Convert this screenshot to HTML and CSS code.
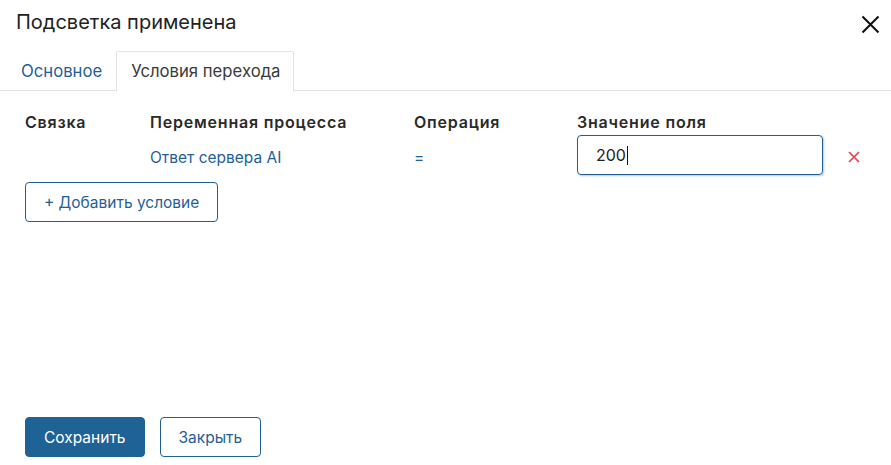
FILE: index.html
```html
<!DOCTYPE html>
<html lang="ru">
<head>
<meta charset="utf-8">
<link rel="stylesheet" href="styles.css">
</head>
<body>
<div class="dialog">
  <div class="head">
    <h1 class="title">Подсветка применена</h1>
    <button class="close" aria-label="Закрыть">
      <svg width="19" height="19" viewBox="0 0 19 19"><path d="M1.5 1.5L17.5 17.5M17.5 1.5L1.5 17.5" stroke="#111" stroke-width="2.1" fill="none"/></svg>
    </button>
  </div>
  <div class="tabs">
    <div class="tab">Основное</div>
    <div class="tab active">Условия перехода</div>
  </div>
  <div class="content">
    <div class="grid">
      <div class="th">Связка</div>
      <div class="th">Переменная процесса</div>
      <div class="th">Операция</div>
      <div class="th">Значение поля</div>
      <div></div>
      <div></div>
      <div class="link">Ответ сервера AI</div>
      <div class="link">=</div>
      <div class="field"><span class="val">200</span><span class="caret"></span></div>
      <div class="del">
        <svg width="12" height="12" viewBox="0 0 12 12"><path d="M1 1L11 11M11 1L1 11" stroke="#e8404c" stroke-width="1.7" fill="none"/></svg>
      </div>
    </div>
    <button class="btn outline add">+ Добавить условие</button>
  </div>
  <div class="footer">
    <button class="btn primary">Сохранить</button>
    <button class="btn outline">Закрыть</button>
  </div>
</div>
</body>
</html>
```
FILE: styles.css
```css
* { box-sizing: border-box; }
html, body { margin: 0; padding: 0; background: #fff; }
body {
  font-family: Inter, "Noto Sans", sans-serif;
  color: #333;
  font-size: 15.5px;
}
.dialog {
  width: 891px;
  height: 465px;
  display: flex;
  flex-direction: column;
}
.head {
  display: flex;
  justify-content: space-between;
  align-items: flex-start;
  padding: 9px 11px 0 16px;
  height: 51px;
}
.title {
  margin: 0;
  font-size: 20px;
  font-weight: 400;
  line-height: 26px;
  color: #222;
}
.close {
  border: 0;
  background: none;
  padding: 0;
  margin: 6px 0 0 0;
  width: 19px;
  height: 19px;
  cursor: pointer;
}
.close svg { display: block; }
.tabs {
  display: flex;
  padding-left: 7px;
  border-bottom: 1px solid #e3e3e3;
  height: 40px;
}
.tab {
  padding: 0 14px;
  height: 40px;
  line-height: 40px;
  color: #1f6097;
  font-size: 16.7px;
}
.tab.active {
  color: #3a3a3a;
  border: 1px solid #e3e3e3;
  border-bottom: 1px solid #fff;
  border-radius: 3px 3px 0 0;
  background: #fff;
  height: 41px;
  line-height: 38px;
  padding: 0 12px 0 14px;
}
.content {
  padding: 21px 0 0 25px;
}
.grid {
  display: grid;
  grid-template-columns: 125px 264px 163px 245px 40px;
  grid-template-rows: 20px 48px;
  align-items: center;
}
.th {
  font-weight: 600;
  color: #2a2a2a;
  font-size: 16px;
  letter-spacing: 0.8px;
  align-self: start;
  line-height: 20px;
}
.link {
  color: #1f6097;
  font-size: 15.5px;
  padding-top: 2px;
}
.field {
  align-self: start;
  height: 40px;
  width: 246px;
  margin-top: 3px;
  border: 1px solid #1f6097;
  border-radius: 4px;
  box-shadow: 1px 1px 2px rgba(31, 96, 151, 0.35);
  display: flex;
  align-items: center;
  padding-left: 18px;
  color: #222;
  font-size: 16px;
}
.caret {
  display: inline-block;
  width: 1px;
  height: 19px;
  background: #111;
  margin-left: 1px;
}
.del {
  display: flex;
  justify-content: flex-end;
  padding: 2px 2px 0 0;
}
.del svg { display: block; }
.btn {
  font-family: Inter, "Noto Sans", sans-serif;
  font-size: 15.5px;
  height: 40px;
  border-radius: 4px;
  padding: 0 18px;
  cursor: pointer;
}
.outline {
  background: #fff;
  color: #1f6097;
  border: 1px solid #1f6097;
}
.primary {
  background: #1f6396;
  color: #fff;
  border: 1px solid #1f6396;
}
.add {
  margin-top: 2px;
  padding: 0 18px;
}
.footer {
  margin-top: auto;
  padding: 0 0 8px 25px;
  display: flex;
  gap: 15px;
}
```
